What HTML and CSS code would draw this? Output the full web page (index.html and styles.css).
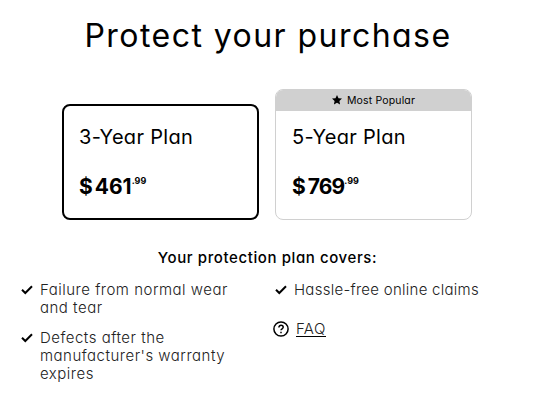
FILE: index.html
```html
<!DOCTYPE html>
<html lang="en">
<head>
<meta charset="utf-8">
<title>Protect your purchase</title>
<link rel="stylesheet" href="styles.css">
</head>
<body>
<main class="protection">
  <h1 class="title">Protect your purchase</h1>
  <div class="plans">
    <section class="plan selected">
      <h2 class="plan-name">3-Year Plan</h2>
      <p class="price"><span class="currency">$</span><span class="amount">461</span><span class="cents">.99</span></p>
    </section>
    <section class="plan popular">
      <div class="ribbon">
        <svg class="star" viewBox="0 0 10 10"><path d="M5 0l1.500 3.200 3.500.4-2.600 2.400.7 3.600L5 7.800 1.900 9.600l.7-3.600L0 3.600l3.500-.4z"/></svg>
        <span>Most Popular</span>
      </div>
      <h2 class="plan-name">5-Year Plan</h2>
      <p class="price"><span class="currency">$</span><span class="amount tight">769</span><span class="cents">.99</span></p>
    </section>
  </div>
  <h3 class="covers">Your protection plan covers:</h3>
  <div class="benefits">
    <ul class="list">
      <li class="item"><svg class="check" viewBox="0 0 12 10"><path d="M1 4.700l3.300 3.300L11 1.300"/></svg><span>Failure from normal wear<br>and tear</span></li>
      <li class="item"><svg class="check" viewBox="0 0 12 10"><path d="M1 4.700l3.300 3.300L11 1.300"/></svg><span>Defects after the<br>manufacturer's warranty<br>expires</span></li>
    </ul>
    <div class="list">
      <div class="item claims"><svg class="check" viewBox="0 0 12 10"><path d="M1 4.700l3.300 3.300L11 1.300"/></svg><span>Hassle-free online claims</span></div>
      <div class="faq">
        <svg class="help" viewBox="0 0 16 16"><circle cx="8" cy="8" r="7.100"/><path d="M5.900 6.400c0-2.800 4.300-2.600 4.300-.1 0 1.500-2.200 1.500-2.200 3"/><path d="M8 10.700v1.500"/></svg>
        <a class="faq-link">FAQ</a>
      </div>
    </div>
  </div>
</main>
</body>
</html>
```
FILE: styles.css
```css
* { box-sizing: border-box; }
body {
  margin: 0;
  background: #fff;
  color: #000;
  font-family: Inter, "Liberation Sans", sans-serif;
  font-feature-settings: "cv11";
}
h1, h2, h3, p, ul { margin: 0; padding: 0; font-weight: 400; }
.protection { width: 552px; height: 400px; overflow: hidden; padding-top: 15px; }
.title { width: 536px; text-align: center; font-size: 32px; line-height: 41px; letter-spacing: 1.45px; white-space: nowrap; }
.plans { display: flex; align-items: flex-end; gap: 16px; margin: 33px 0 0 62px; }
.plan { width: 197px; border-radius: 8px; overflow: hidden; white-space: nowrap; }
.selected { height: 116px; border: 2px solid #000; padding: 17px 0 0 15px; }
.popular { height: 131px; border: 1px solid #d0d0d0; }
.popular .plan-name { margin: 12px 0 0 16px; }
.popular .price { margin-left: 16px; }
.ribbon { display: flex; align-items: center; justify-content: center; gap: 5px; height: 21px; padding-bottom: 1px; background: #d0d0d0; font-size: 10.5px; letter-spacing: 0.15px; }
.star { width: 10px; height: 10px; }
.plan-name { font-size: 20px; line-height: 28px; letter-spacing: 0.3px; }
.price { display: flex; align-items: flex-start; margin-top: 21px; font-size: 21px; line-height: 30px; font-weight: 700; }
.currency { margin-right: 2px; }
.tight { letter-spacing: -0.9px; }
.cents { font-size: 9px; line-height: 17px; }
.covers { width: 535px; margin-top: 27px; text-align: center; font-size: 15px; line-height: 22px; font-weight: 500; letter-spacing: 0.6px; }
.benefits { display: flex; margin: 12px 0 0 21px; }
.list { width: 254px; list-style: none; }
.item { display: flex; gap: 7px; margin-bottom: 12px; font-size: 15px; line-height: 18px; font-weight: 300; color: #222; letter-spacing: 0.5px; white-space: nowrap; }
.claims { letter-spacing: 0.27px; }
.check { width: 12px; height: 10px; margin-top: 4px; fill: none; stroke: #000; stroke-width: 2; }
.faq { display: flex; gap: 7px; margin: 21px 0 0 -2px; font-size: 15px; line-height: 18px; font-weight: 300; color: #222; letter-spacing: 0.4px; }
.help { width: 16px; height: 16px; margin-top: 1px; fill: none; stroke: #000; stroke-width: 1.5; }
.faq-link { height: 17px; border-bottom: 1px solid #000; }
```
